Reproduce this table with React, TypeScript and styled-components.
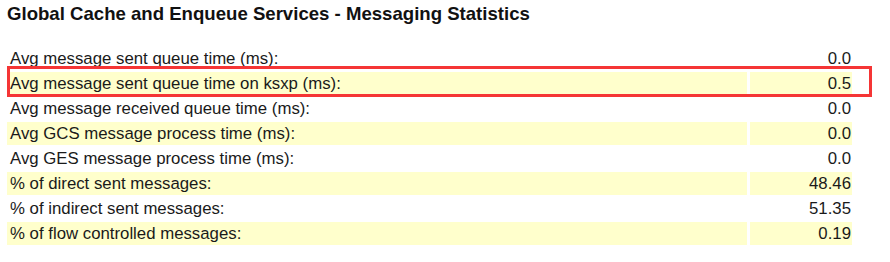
import React from 'react';
import styled, { createGlobalStyle } from 'styled-components';

const GlobalStyle = createGlobalStyle`
  html, body {
    margin: 0;
    padding: 0;
    background: #ffffff;
  }
`;

interface Stat {
  label: string;
  value: string;
  flagged?: boolean;
}

const stats: Stat[] = [
  { label: 'Avg message sent queue time (ms):', value: '0.0' },
  { label: 'Avg message sent queue time on ksxp (ms):', value: '0.5', flagged: true },
  { label: 'Avg message received queue time (ms):', value: '0.0' },
  { label: 'Avg GCS message process time (ms):', value: '0.0' },
  { label: 'Avg GES message process time (ms):', value: '0.0' },
  { label: '% of direct sent messages:', value: '48.46' },
  { label: '% of indirect sent messages:', value: '51.35' },
  { label: '% of flow controlled messages:', value: '0.19' },
];

const ROW_PITCH = 25;

const Page = styled.div`
  width: 890px;
  height: 262px;
  padding: 3px 0 0 7px;
  box-sizing: border-box;
  font-family: 'Liberation Sans', Arial, sans-serif;
  color: #1a1a1a;
`;

const Title = styled.h3`
  margin: 0;
  font-size: 18.6px;
  font-weight: bold;
  line-height: 22px;
  color: #111111;
`;

const TableWrap = styled.div`
  position: relative;
  margin-top: 22px;
  width: 847px;
`;

const StatTable = styled.table`
  border-collapse: separate;
  border-spacing: 3px 2px;
  margin: -2px 0 0 -3px;
  width: 851px;
  font-size: 16.8px;
`;

const Row = styled.tr<{ $shade: boolean }>`
  background: ${(p) => (p.$shade ? '#ffffcc' : 'transparent')};
`;

const Cell = styled.td<{ $num?: boolean }>`
  height: 23px;
  padding: 1px ${(p) => (p.$num ? '1px' : '3px')} 0;
  text-align: ${(p) => (p.$num ? 'right' : 'left')};
  width: ${(p) => (p.$num ? '102px' : 'auto')};
  white-space: nowrap;
  line-height: 20px;
  box-sizing: border-box;
`;

// red annotation box drawn over the flagged row
const Highlight = styled.div`
  position: absolute;
  left: 0;
  width: 865px;
  height: 31px;
  border: 3px solid #f53535;
  box-sizing: border-box;
  pointer-events: none;
`;

const App = () => {
  const flaggedIndex = stats.findIndex((s) => s.flagged);
  return (
    <Page>
      <GlobalStyle />
      <Title>Global Cache and Enqueue Services - Messaging Statistics</Title>
      <TableWrap>
        <StatTable>
          <tbody>
            {stats.map((s, i) => (
              <Row key={s.label} $shade={i % 2 === 1}>
                <Cell>{s.label}</Cell>
                <Cell $num>{s.value}</Cell>
              </Row>
            ))}
          </tbody>
        </StatTable>
        {flaggedIndex >= 0 && <Highlight style={{ top: flaggedIndex * ROW_PITCH - 4 }} />}
      </TableWrap>
    </Page>
  );
};

export default App;
